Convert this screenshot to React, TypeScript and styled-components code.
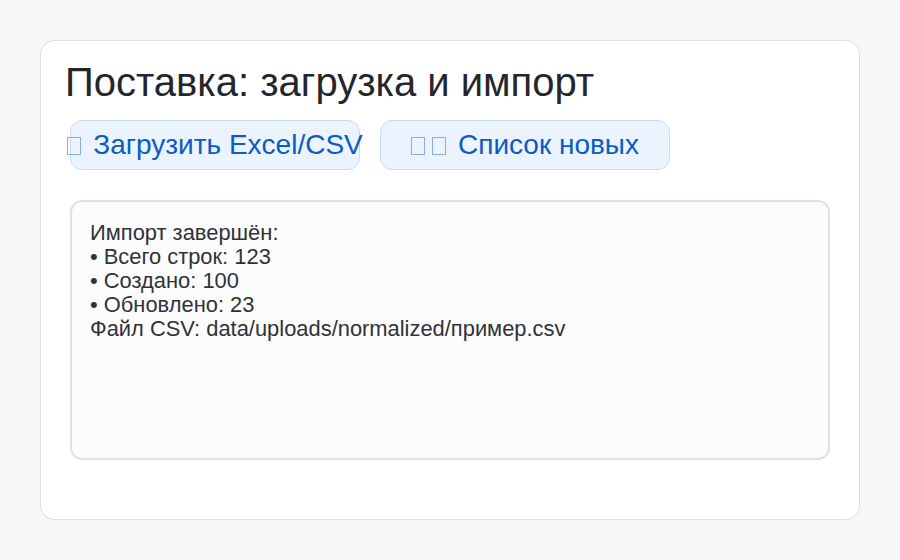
import React from 'react'
import styled, { createGlobalStyle } from 'styled-components'

const GlobalStyle = createGlobalStyle`
    html, body {
        margin: 0;
        padding: 0;
        background: #f6f7f9;
        font-family: 'Liberation Sans', Arial, sans-serif;
    }
`

const Page = styled.div`
    padding: 40px;
    height: 560px;
    box-sizing: border-box;
`

const Card = styled.section`
    height: 480px;
    box-sizing: border-box;
    background: #ffffff;
    border: 1.5px solid #dadfe7;
    border-radius: 14px;
    padding: 19px 24px;
`

const Title = styled.h1`
    margin: 0;
    font-size: 40px;
    font-weight: 400;
    color: #24262b;
`

const Actions = styled.div`
    display: flex;
    gap: 20px;
    margin: 15px 5px 0;
`

const ActionButton = styled.button`
    width: 290px;
    height: 50px;
    flex: none;
    display: flex;
    align-items: center;
    justify-content: center;
    white-space: nowrap;
    background: #ebf3fe;
    border: 1px solid #c8daf2;
    border-radius: 12px;
    color: #0b5cc2;
    font-family: 'Liberation Sans', Arial, sans-serif;
    font-size: 28px;
    padding: 0;
    cursor: pointer;
`

// missing-glyph box, as the emoji shows in the reference
const Tofu = styled.span<{ $last?: boolean }>`
    display: inline-block;
    flex: none;
    width: 12px;
    height: 16px;
    border: 1px solid #86aee6;
    margin-right: ${(p) => (p.$last ? '12px' : '7px')};
    margin-top: 2px;
`

const ResultBox = styled.div`
    margin: 30px 5px 0;
    height: 260px;
    box-sizing: border-box;
    background: #fcfcfd;
    border: 2px solid #dde1e8;
    border-radius: 12px;
    padding: 19px 18px;
    font-size: 21.9px;
    line-height: 24px;
    color: #303238;
    white-space: pre-line;
`

const resultText = [
    'Импорт завершён:',
    '• Всего строк: 123',
    '• Создано: 100',
    '• Обновлено: 23',
    'Файл CSV: data/uploads/normalized/пример.csv',
].join('\n')

const App = () => {
    return (
        <Page>
            <GlobalStyle />
            <Card>
                <Title>Поставка: загрузка и импорт</Title>
                <Actions>
                    <ActionButton type='button'>
                        <Tofu $last />
                        Загрузить Excel/CSV
                    </ActionButton>
                    <ActionButton type='button'>
                        <Tofu />
                        <Tofu $last />
                        Список новых
                    </ActionButton>
                </Actions>
                <ResultBox>{resultText}</ResultBox>
            </Card>
        </Page>
    )
}

export default App
